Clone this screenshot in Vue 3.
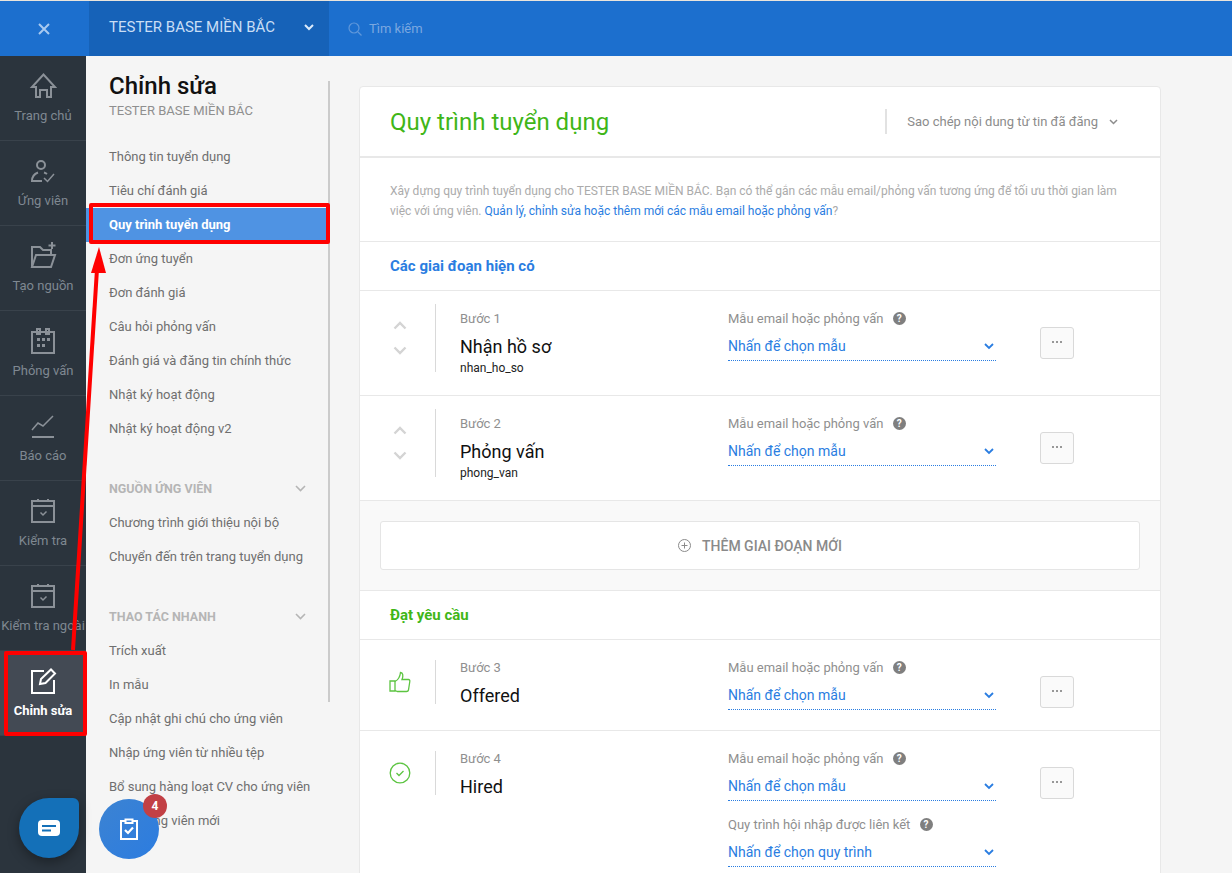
<script setup>
const calendarCheck = {
  shapes: ['M3 4h22v21H3z', 'M3 9h22', 'M9 2v3', 'M19 2v3'],
  thin: ['M11.500 15.500l2.500 2.500 3.500-3.500'],
  fills: []
}
const railItems = [
  { label: 'Trang chủ', shapes: ['M7 25V15H3L14.500 2.500 26 15h-4v10h-4v-7h-7v7z'], fills: [] },
  { label: 'Ứng viên', shapes: ['M12 4a4 4 0 1 0 0 8 4 4 0 0 0 0-8z', 'M13 24H3c0-4 2-7 6-8.500', 'M15 15.500c1 .3 2 .8 3 1.500'], thin: ['M15 21l3.500 3.500L25 17'], fills: [] },
  { label: 'Tạo nguồn', shapes: ['M3 25V5h8l3 3h8v5', 'M3 25l4-12h19l-4 12z', 'M23 0v7', 'M19.500 3.500h7'], fills: [] },
  { label: 'Phỏng vấn', shapes: ['M3 5h22v21H3z', 'M8 2h3v5H8z', 'M17 2h3v5h-3z'], fills: ['M8 11h3v3H8z', 'M13 11h3v3h-3z', 'M18 11h3v3h-3z', 'M8 17h3v3H8z', 'M13 17h3v3h-3z'] },
  { label: 'Báo cáo', shapes: ['M3 25h22'], thin: ['M3 18l6-7 5 3L24 4'], fills: [] },
  { label: 'Kiểm tra', ...calendarCheck },
  { label: 'Kiểm tra ngoài', ...calendarCheck },
  { label: 'Chỉnh sửa', active: true, shapes: ['M15 4H3v22h22V13', 'M11 17l1-5L22 2.500l4 4L16.500 16z'], fills: [] }
]
const mainLinks = [
  { label: 'Thông tin tuyển dụng' },
  { label: 'Tiêu chí đánh giá' },
  { label: 'Quy trình tuyển dụng', active: true },
  { label: 'Đơn ứng tuyển' },
  { label: 'Đơn đánh giá' },
  { label: 'Câu hỏi phỏng vấn' },
  { label: 'Đánh giá và đăng tin chính thức' },
  { label: 'Nhật ký hoạt động' },
  { label: 'Nhật ký hoạt động v2' }
]
const groups = [
  { title: 'NGUỒN ỨNG VIÊN', links: ['Chương trình giới thiệu nội bộ', 'Chuyển đến trên trang tuyển dụng'] },
  { title: 'THAO TÁC NHANH', links: ['Trích xuất', 'In mẫu', 'Cập nhật ghi chú cho ứng viên', 'Nhập ứng viên từ nhiều tệp', 'Bổ sung hàng loạt CV cho ứng viên', 'Thêm ứng viên mới'] }
]
const stages = [
  { step: 'Bước 1', name: 'Nhận hồ sơ', code: 'nhan_ho_so' },
  { step: 'Bước 2', name: 'Phỏng vấn', code: 'phong_van' }
]
</script>

<template>
  <div class="page">
    <header class="topbar">
      <div class="close-cell">
        <svg width="12" height="12" viewBox="0 0 12 12"><path d="M1 1l10 10M11 1L1 11" /></svg>
      </div>
      <div class="company">
        <span>TESTER BASE MIỀN BẮC</span>
        <svg width="10" height="7" viewBox="0 0 10 7"><path d="M1 1l4 4 4-4" /></svg>
      </div>
      <div class="search">
        <svg width="14" height="14" viewBox="0 0 14 14"><circle cx="6" cy="6" r="5" /><path d="M10 10l3.500 3.500" /></svg>
        <span>Tìm kiếm</span>
      </div>
    </header>

    <div class="body">
      <nav class="rail">
        <a v-for="item in railItems" :key="item.label" class="rail-item" :class="{ active: item.active }">
          <svg class="rail-icon" width="28" height="28" viewBox="0 0 28 28">
            <path v-for="d in item.shapes" :key="d" :d="d" class="stroke" />
            <path v-for="d in item.thin" :key="d" :d="d" class="stroke thin" />
            <path v-for="d in item.fills" :key="d" :d="d" class="fill" />
          </svg>
          <span>{{ item.label }}</span>
        </a>
      </nav>

      <aside class="sidebar">
        <div class="side-head">
          <h2>Chỉnh sửa</h2>
          <p>TESTER BASE MIỀN BẮC</p>
        </div>
        <a v-for="link in mainLinks" :key="link.label" class="side-link" :class="{ active: link.active }">{{ link.label }}</a>
        <section v-for="g in groups" :key="g.title" class="side-group">
          <div class="group-title">
            <span>{{ g.title }}</span>
            <svg width="11" height="7" viewBox="0 0 11 7"><path d="M1 1l4.500 4.500L10 1" /></svg>
          </div>
          <a v-for="l in g.links" :key="l" class="side-link">{{ l }}</a>
        </section>
        <div class="side-scroll"></div>
      </aside>

      <main class="main">
        <div class="card">
          <div class="card-head">
            <h1>Quy trình tuyển dụng</h1>
            <div class="copy">
              <span>Sao chép nội dung từ tin đã đăng</span>
              <svg width="9" height="6" viewBox="0 0 9 6"><path d="M1 1l3.500 3.500L8 1" /></svg>
            </div>
          </div>

          <p class="intro">
            Xây dựng quy trình tuyển dụng cho TESTER BASE MIỀN BẮC. Bạn có thể gắn các mẫu email/phỏng vấn tương ứng để tối ưu thời gian làm việc với ứng viên.
            <a>Quản lý, chỉnh sửa hoặc thêm mới các mẫu email hoặc phỏng vấn</a>?
          </p>

          <h3 class="section-title blue">Các giai đoạn hiện có</h3>

          <div v-for="s in stages" :key="s.step" class="stage">
            <div class="stage-lead">
              <div class="arrows">
                <svg width="14" height="9" viewBox="0 0 14 9"><path d="M1.500 7.500L7 2l5.500 5.500" /></svg>
                <svg width="14" height="9" viewBox="0 0 14 9"><path d="M1.500 1.500L7 7l5.500-5.500" /></svg>
              </div>
            </div>
            <div class="stage-info">
              <div class="step">{{ s.step }}</div>
              <div class="name">{{ s.name }}</div>
              <div class="code">{{ s.code }}</div>
            </div>
            <div class="stage-form">
              <div class="field">
                <label>Mẫu email hoặc phỏng vấn <i class="help">?</i></label>
                <div class="picker">
                  <span>Nhấn để chọn mẫu</span>
                  <svg width="10" height="7" viewBox="0 0 10 7"><path d="M1 1l4 4 4-4" /></svg>
                </div>
              </div>
            </div>
            <button class="more"><b></b><b></b><b></b></button>
          </div>

          <div class="add-wrap">
            <button class="add-btn">
              <svg width="13" height="13" viewBox="0 0 13 13"><circle cx="6.500" cy="6.500" r="6" /><path d="M6.500 3.500v6M3.500 6.500h6" /></svg>
              <span>THÊM GIAI ĐOẠN MỚI</span>
            </button>
          </div>

          <h3 class="section-title green">Đạt yêu cầu</h3>

          <div class="stage short">
            <div class="stage-lead">
              <svg class="green-icon" width="22" height="22" viewBox="0 0 22 22">
                <path d="M1 10h5v10H1z" />
                <path d="M6 10.500c3-1.500 5-4.500 5.500-9 2.500 0 3 3.500 1.500 7h6.500c1 0 1.500 1 1.300 2l-1.300 8.500c-.2 1-1 1.500-2 1.500H8.500L6 19.500" />
              </svg>
            </div>
            <div class="stage-info">
              <div class="step">Bước 3</div>
              <div class="name">Offered</div>
            </div>
            <div class="stage-form">
              <div class="field">
                <label>Mẫu email hoặc phỏng vấn <i class="help">?</i></label>
                <div class="picker">
                  <span>Nhấn để chọn mẫu</span>
                  <svg width="10" height="7" viewBox="0 0 10 7"><path d="M1 1l4 4 4-4" /></svg>
                </div>
              </div>
            </div>
            <button class="more"><b></b><b></b><b></b></button>
          </div>

          <div class="stage short last">
            <div class="stage-lead">
              <svg class="green-icon" width="22" height="22" viewBox="0 0 22 22">
                <circle cx="11" cy="11" r="9.800" />
                <path d="M7.500 11l2.500 2.500 4.500-4.500" />
              </svg>
            </div>
            <div class="stage-info">
              <div class="step">Bước 4</div>
              <div class="name">Hired</div>
            </div>
            <div class="stage-form">
              <div class="field">
                <label>Mẫu email hoặc phỏng vấn <i class="help">?</i></label>
                <div class="picker">
                  <span>Nhấn để chọn mẫu</span>
                  <svg width="10" height="7" viewBox="0 0 10 7"><path d="M1 1l4 4 4-4" /></svg>
                </div>
              </div>
              <div class="field second">
                <label>Quy trình hội nhập được liên kết <i class="help">?</i></label>
                <div class="picker">
                  <span>Nhấn để chọn quy trình</span>
                  <svg width="10" height="7" viewBox="0 0 10 7"><path d="M1 1l4 4 4-4" /></svg>
                </div>
              </div>
            </div>
            <button class="more"><b></b><b></b><b></b></button>
          </div>
        </div>
      </main>
    </div>

    <button class="fab-chat">
      <svg width="24" height="18" viewBox="0 0 24 18">
        <path d="M5 1h14a4 4 0 0 1 4 4v8a4 4 0 0 1-4 4H5a4 4 0 0 1-4-4V5a4 4 0 0 1 4-4z" fill="#fff" />
        <path d="M5 7h14M5 11.500h9" stroke="#1470b8" stroke-width="2" fill="none" />
      </svg>
    </button>
    <button class="fab-task">
      <svg width="18" height="22" viewBox="0 0 18 22">
        <path d="M5.500 3H1v18h16V3h-4.500" />
        <path d="M5.500 1.500h7V5h-7z" />
        <path d="M5 12l3 3 5-5.500" class="thick" />
      </svg>
      <span class="badge">4</span>
    </button>

    <div class="mark mark-link"></div>
    <div class="mark mark-rail"></div>
    <svg class="arrow" width="120" height="420" viewBox="0 0 120 420">
      <path d="M10 411L34 30" stroke="#f00" stroke-width="4" fill="none" />
      <path d="M36 8L28 34h15z" fill="#f00" />
    </svg>
  </div>
</template>

<style scoped>
.page {
  position: relative;
  width: 1232px;
  height: 873px;
  overflow: hidden;
  display: flex;
  flex-direction: column;
  background: #f5f5f5;
  font-family: Roboto, "Noto Sans", sans-serif;
  font-size: 13px;
}
.topbar {
  flex: 0 0 56px;
  box-sizing: border-box;
  display: flex;
  background: #1c6fce;
  border-top: 1px solid #e9e4dc;
}
.close-cell {
  width: 89px;
  box-sizing: border-box;
  padding-right: 2px;
  display: flex;
  align-items: center;
  justify-content: center;
}
.close-cell svg path { stroke: #a8c9f0; stroke-width: 2; fill: none; }
.company {
  width: 240px;
  box-sizing: border-box;
  padding: 0 15px 3px 20px;
  display: flex;
  align-items: center;
  justify-content: space-between;
  background: #1662b8;
  color: #c9def5;
  font-size: 15px;
}
.company svg path { stroke: #dcebfb; stroke-width: 2; fill: none; }
.search {
  display: flex;
  align-items: center;
  gap: 7px;
  padding-left: 19px;
  color: #7ba8e0;
}
.search svg { fill: none; stroke: #5f97da; stroke-width: 1.200; }

.body { flex: 1; display: flex; min-height: 0; }
.rail {
  width: 86px;
  flex: none;
  background: #2b343d;
}
.rail-item {
  height: 85px;
  box-sizing: border-box;
  padding-top: 16px;
  display: flex;
  flex-direction: column;
  align-items: center;
  gap: 8px;
  border-bottom: 1px solid #39424b;
  color: #7f8891;
  white-space: nowrap;
}
.rail-item span { line-height: 15px; }
.rail-icon { flex: none; }
.rail-icon .stroke { fill: none; stroke: #8b9198; stroke-width: 2; }
.rail-icon .thin { stroke-width: 1.500; }
.rail-icon .fill { fill: #8b9198; }
.rail-item.active { background: #434a54; color: #fff; font-weight: 700; }
.rail-item.active .stroke { stroke: #fff; }

.sidebar {
  position: relative;
  width: 243px;
  flex: none;
  background: #f5f5f5;
}
.side-head { padding: 16px 0 0 23px; height: 84px; box-sizing: border-box; }
.side-head h2 { margin: 0; font-size: 24px; line-height: 28px; font-weight: 500; color: #111; }
.side-head p { margin: 3px 0 0; font-size: 13px; line-height: 16px; color: #8f8f8f; }
.side-link {
  display: block;
  height: 34px;
  line-height: 34px;
  padding-left: 23px;
  color: #6f6f6f;
  white-space: nowrap;
}
.side-link.active { background: #4f93e3; color: #fff; font-weight: 700; }
.side-group { margin-top: 25px; }
.group-title {
  height: 35px;
  box-sizing: border-box;
  display: flex;
  align-items: center;
  justify-content: space-between;
  padding: 0 23px 1px;
  color: #b5b5b5;
  font-weight: 700;
  font-size: 12.500px;
}
.group-title svg path { stroke: #b5b5b5; stroke-width: 1.600; fill: none; }
.side-scroll {
  position: absolute;
  left: 242px;
  top: 25px;
  width: 2px;
  height: 621px;
  background: #cbcbcb;
}

.main { flex: 1; padding: 30px 0 0 30px; min-width: 0; }
.card {
  width: 802px;
  box-sizing: border-box;
  background: #fff;
  border: 1px solid #e8e8e8;
  border-radius: 4px;
}
.card-head {
  height: 71px;
  box-sizing: border-box;
  padding: 0 29px 0 30px;
  display: flex;
  align-items: center;
  justify-content: space-between;
  border-bottom: 2px solid #e8e8e8;
}
.card-head h1 { margin: 0; font-size: 24px; font-weight: 400; color: #3fb618; }
.copy {
  height: 25px;
  display: flex;
  align-items: center;
  gap: 11px;
  padding: 0 13px 0 20px;
  border-left: 2px solid #e2e2e2;
  color: #8c8c8c;
}
.copy svg path { stroke: #8c8c8c; stroke-width: 1.500; fill: none; }
.intro {
  margin: 0;
  height: 84px;
  box-sizing: border-box;
  padding: 23px 40px 0 30px;
  font-size: 12px;
  line-height: 20px;
  color: #ababab;
  border-bottom: 1px solid #e8e8e8;
}
.intro a { color: #2a7de1; }
.section-title {
  margin: 0;
  height: 49px;
  box-sizing: border-box;
  padding-left: 30px;
  line-height: 48px;
  font-size: 15px;
  font-weight: 700;
  border-bottom: 1px solid #e8e8e8;
}
.blue { color: #2a7de1; }
.green { color: #3fb618; }

.stage {
  height: 105px;
  box-sizing: border-box;
  padding-top: 13px;
  display: flex;
  align-items: flex-start;
  border-bottom: 1px solid #e8e8e8;
}
.stage.short { height: 91px; padding-top: 20px; }
.stage.last { height: 160px; border-bottom: 0; }
.stage-lead {
  width: 76px;
  height: 68px;
  flex: none;
  box-sizing: border-box;
  border-right: 1px solid #d9d9d9;
  display: flex;
  justify-content: center;
  padding: 17px 0 0 4px;
}
.short .stage-lead { height: 44px; padding: 11px 0 0 4px; }
.arrows { display: flex; flex-direction: column; gap: 16px; }
.arrows svg path { stroke: #d4d4d4; stroke-width: 2.400; fill: none; }
.green-icon { fill: none; stroke: #5cc441; stroke-width: 1.300; }
.stage-info { width: 292px; flex: none; padding-left: 24px; box-sizing: border-box; margin-top: 8px; }
.short .stage-info, .short .stage-form { margin-top: 1px; }
.step { color: #8f8f8f; line-height: 16px; margin-top: -1px; }
.name { font-size: 18px; line-height: 22px; color: #111; margin-top: 9px; }
.code { font-size: 12px; line-height: 14px; color: #222; margin-top: 3px; }
.stage-form { width: 268px; flex: none; margin-right: 44px; margin-top: 8px; }
label { display: block; color: #8f8f8f; line-height: 16px; margin-top: -1px; white-space: nowrap; }
.help {
  display: inline-block;
  width: 13px;
  height: 13px;
  margin-left: 6px;
  border-radius: 50%;
  background: #7f7f7f;
  color: #fff;
  font-style: normal;
  font-weight: 700;
  font-size: 10px;
  line-height: 13px;
  text-align: center;
  vertical-align: 1px;
}
.picker {
  margin-top: 6px;
  height: 28px;
  box-sizing: border-box;
  padding: 0 2px 1px 0;
  display: flex;
  align-items: center;
  justify-content: space-between;
  border-bottom: 1px dotted #2a7de1;
  color: #2a7de1;
  font-size: 14px;
}
.picker svg path { stroke: #2a7de1; stroke-width: 1.800; fill: none; }
.second { margin-top: 17px; }
.more {
  width: 34px;
  height: 32px;
  margin-top: 23px;
  padding: 0 0 3px;
  flex: none;
  display: flex;
  align-items: center;
  justify-content: center;
  gap: 2px;
  background: #fafafa;
  border: 1px solid #d9d9d9;
  border-radius: 3px;
}
.short .more { margin-top: 16px; }
.more b { width: 2px; height: 2px; border-radius: 50%; background: #777; }
.add-wrap {
  height: 90px;
  box-sizing: border-box;
  padding: 20px 20px 0;
  background: #f9f9f9;
  border-bottom: 1px solid #e8e8e8;
}
.add-btn {
  width: 100%;
  height: 49px;
  display: flex;
  align-items: center;
  justify-content: center;
  gap: 11px;
  padding: 0;
  background: #fff;
  border: 1px solid #e5e5e5;
  border-radius: 3px;
  font-family: inherit;
  font-size: 14px;
  font-weight: 500;
  color: #8a8a8a;
}
.add-btn svg { fill: none; stroke: #8a8a8a; stroke-width: 1; }

.fab-chat {
  position: absolute;
  left: 19px;
  top: 798px;
  width: 60px;
  height: 60px;
  padding: 0;
  border: 0;
  display: flex;
  align-items: center;
  justify-content: center;
  background: #1470b8;
  border-radius: 50% 6px 50% 50%;
  box-shadow: 0 4px 12px rgba(0, 0, 0, .35);
}
.fab-task {
  position: absolute;
  left: 99px;
  top: 799px;
  width: 60px;
  height: 60px;
  padding: 0;
  border: 0;
  display: flex;
  align-items: center;
  justify-content: center;
  background: linear-gradient(135deg, #3c83d2, #2c7ce0);
  border-radius: 50%;
}
.fab-task svg { fill: none; stroke: #fff; stroke-width: 2; }
.fab-task .thick { stroke-width: 2.200; }
.badge {
  position: absolute;
  left: 44px;
  top: -5px;
  width: 24px;
  height: 24px;
  border-radius: 50%;
  background: #c24045;
  color: #fff;
  font-family: Roboto, sans-serif;
  font-weight: 700;
  font-size: 12px;
  line-height: 24px;
  text-align: center;
}
.mark {
  position: absolute;
  box-sizing: border-box;
  border: 4px solid #f00;
  border-radius: 2px;
}
.mark-link { left: 89px; top: 203px; width: 241px; height: 41px; }
.mark-rail { left: 4px; top: 651px; width: 83px; height: 85px; }
.arrow { position: absolute; left: 63px; top: 239px; pointer-events: none; }
</style>
